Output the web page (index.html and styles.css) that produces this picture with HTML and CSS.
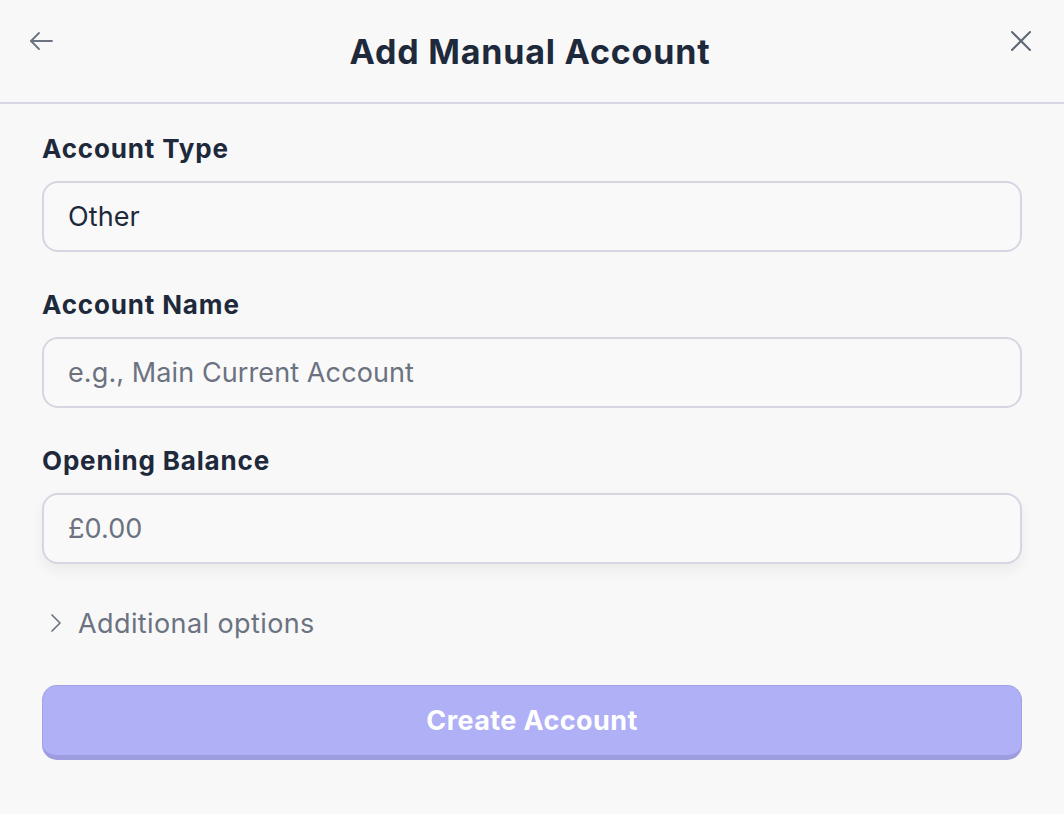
FILE: index.html
```html
<!DOCTYPE html>
<html lang="en">
<head>
<meta charset="utf-8">
<title>Add Manual Account</title>
<link rel="stylesheet" href="styles.css">
</head>
<body>
<div class="dialog">
  <header class="header">
    <button class="icon-btn back" aria-label="Back">
      <svg width="26" height="22" viewBox="0 0 26 22" fill="none" stroke="#6b7280" stroke-width="1.8" stroke-linecap="round" stroke-linejoin="round"><path d="M24 11H3"/><path d="M11 3L3 11l8 8"/></svg>
    </button>
    <h1 class="title">Add Manual Account</h1>
    <button class="icon-btn close" aria-label="Close">
      <svg width="22" height="22" viewBox="0 0 22 22" fill="none" stroke="#5f6675" stroke-width="2" stroke-linecap="round"><path d="M2 2l18 18"/><path d="M20 2L2 20"/></svg>
    </button>
  </header>
  <main class="form">
    <div class="field">
      <label class="label">Account Type</label>
      <div class="input value">Other</div>
    </div>
    <div class="field">
      <label class="label">Account Name</label>
      <div class="input placeholder">e.g., Main Current Account</div>
    </div>
    <div class="field">
      <label class="label">Opening Balance</label>
      <div class="input placeholder focused">£0.00</div>
    </div>
    <div class="more">
      <svg width="14" height="22" viewBox="0 0 14 22" fill="none" stroke="#6b7280" stroke-width="1.7" stroke-linecap="round" stroke-linejoin="round"><path d="M3 3l8 8-8 8"/></svg>
      <span>Additional options</span>
    </div>
    <button class="submit">Create Account</button>
  </main>
</div>
</body>
</html>
```
FILE: styles.css
```css
* { box-sizing: border-box; }
html, body {
  margin: 0;
  padding: 0;
  background: #f8f8f8;
  font-family: Inter, "Noto Sans", sans-serif;
  color: #1e293b;
}
.dialog {
  width: 1064px;
  min-height: 814px;
  background: #f8f8f8;
}
.header {
  height: 104px;
  border-bottom: 2px solid #d6d6e4;
  display: grid;
  grid-template-columns: 1fr auto 1fr;
  align-items: center;
  padding: 0 32px 0 28px;
}
.icon-btn {
  background: none;
  border: 0;
  padding: 0;
  display: flex;
  align-items: center;
  justify-content: center;
  cursor: pointer;
  margin-top: -20px;
}
.back { justify-self: start; }
.close { justify-self: end; }
.title {
  margin: 0;
  font-size: 34px;
  font-weight: 700;
  color: #1e293b;
  letter-spacing: 0.8px;
}
.form {
  padding: 29px 42px 0 42px;
  display: flex;
  flex-direction: column;
}
.field {
  display: flex;
  flex-direction: column;
  gap: 16px;
  margin-bottom: 37px;
}
.label {
  font-size: 26px;
  line-height: 32px;
  font-weight: 700;
  color: #1e293b;
  letter-spacing: 0.85px;
}
.input {
  height: 71px;
  border: 2px solid #d5d6e2;
  border-radius: 16px;
  background: #f9f9f9;
  padding: 0 24px;
  display: flex;
  align-items: center;
  font-size: 27px;
  letter-spacing: 0.1px;
}
.value { color: #1e293b; }
.placeholder { color: #6b7280; }
.focused { box-shadow: 0 6px 14px rgba(0,0,0,0.06); }
.more {
  margin-top: 6px;
  height: 32px;
  display: flex;
  align-items: center;
  gap: 15px;
  padding-left: 7px;
  font-size: 27px;
  letter-spacing: 0.4px;
  color: #6b7280;
}
.submit {
  margin-top: 46px;
  height: 75px;
  border: 1px solid #a2a2e6;
  border-bottom: 5px solid #9c9cdf;
  border-radius: 15px;
  background: #afb0f5;
  color: #ffffff;
  font-family: Inter, "Noto Sans", sans-serif;
  font-size: 27px;
  font-weight: 700;
  letter-spacing: 0.4px;
  cursor: pointer;
}
```
